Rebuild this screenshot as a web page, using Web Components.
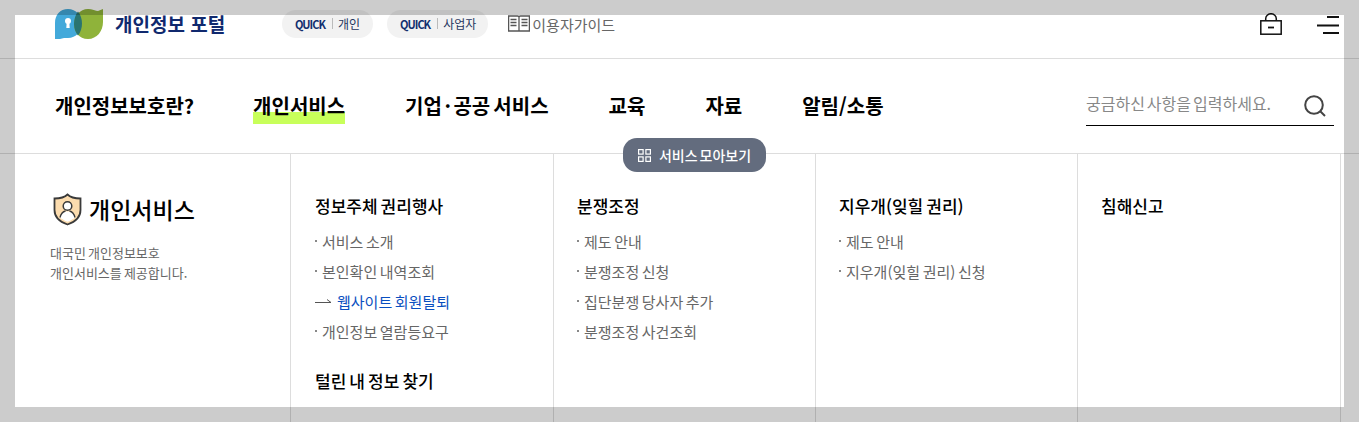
<!DOCTYPE html>
<html lang="ko">
<head>
<meta charset="utf-8">
<title>개인정보 포털</title>
<style>
html,body{margin:0;padding:0;height:422px;overflow:hidden;background:#fff}
body{font-family:"Noto Sans CJK KR","Noto Sans",sans-serif;position:relative;color:#000}
.dot{margin:0 2.500px}
</style>
</head>
<body>
<top-bar>
  <site-logo></site-logo>
  <quick-pill label="개인"></quick-pill>
  <quick-pill label="사업자" style="padding-right:12px"></quick-pill>
  <guide-link></guide-link>
</top-bar>
<main-nav>
  <nav-item style="margin-right:-1px">개인정보보호란?</nav-item>
  <nav-item active>개인서비스</nav-item>
  <nav-item>기업<span class="dot">·</span>공공 서비스</nav-item>
  <nav-item>교육</nav-item>
  <nav-item>자료</nav-item>
  <nav-item>알림/소통</nav-item>
  <search-box></search-box>
</main-nav>
<mega-panel>
  <panel-intro></panel-intro>
  <menu-col style="padding-left:24px">
    <menu-head>정보주체 권리행사</menu-head>
    <menu-item>서비스 소개</menu-item>
    <menu-item>본인확인 내역조회</menu-item>
    <menu-item active>웹사이트 회원탈퇴</menu-item>
    <menu-item>개인정보 열람등요구</menu-item>
    <menu-head second>털린 내 정보 찾기</menu-head>
  </menu-col>
  <menu-col>
    <menu-head>분쟁조정</menu-head>
    <menu-item>제도 안내</menu-item>
    <menu-item>분쟁조정 신청</menu-item>
    <menu-item>집단분쟁 당사자 추가</menu-item>
    <menu-item>분쟁조정 사건조회</menu-item>
  </menu-col>
  <menu-col>
    <menu-head>지우개(잊힐 권리)</menu-head>
    <menu-item>제도 안내</menu-item>
    <menu-item>지우개(잊힐 권리) 신청</menu-item>
  </menu-col>
  <menu-col>
    <menu-head>침해신고</menu-head>
  </menu-col>
</mega-panel>
<collect-button></collect-button>
<frame-overlay></frame-overlay>
<script>
function def(name, css, html){
  customElements.define(name, class extends HTMLElement{
    constructor(){
      super();
      this.attachShadow({mode:'open'}).innerHTML='<style>'+css+'</style>'+(typeof html==='function'?html(this):html);
    }
  });
}
def('top-bar',`:host{display:flex;align-items:center;box-sizing:border-box;height:59px;padding:0 20px 11px 55px;border-bottom:1px solid #ddd;position:relative}
.r{margin-left:auto;display:flex;align-items:center;gap:35px;padding-top:2px}svg{display:block}`,
`<slot></slot><div class="r">
<svg width="22" height="23" viewBox="0 0 22 23" fill="none" stroke="#111" stroke-width="1.500"><rect x=".8" y="7.800" width="20.400" height="13.400"/><path d="M5.700 7.500V5.700a5 4.700 0 0 1 10.600 0v1.800"/><path d="M8 14.500h6" stroke-width="1.800"/></svg>
<svg width="22" height="20" viewBox="0 0 22 20" fill="none" stroke="#111" stroke-width="2"><path d="M10 2h12M0 10.500h22M6 18h16"/></svg>
</div>`);
def('site-logo',`:host{display:flex;align-items:center;gap:12px;color:#10296e;font-size:19px;font-weight:700;line-height:30px;margin-right:56.700px;white-space:nowrap}
svg{display:block;flex:none;margin-top:0}`,
`<svg width="48" height="30" viewBox="0 0 48 30">
<path d="M13 0C21 0 27 6.500 27 14.500S21 29 13 29H9L5 30 0 30V14C0 6 5 0 13 0Z" fill="#43a9da"/>
<path d="M33 0C37 0 41 2 43 2L48 0V13C48 22 42 30 33 30S19 23 19 15 25 0 33 0Z" fill="#8fb33a"/>
<path d="M23 2.500C25.500 5.500 27 10 27 14.500S25.500 23.500 23 26.500C20.500 23.500 19 19.500 19 15S20.500 5.500 23 2.500Z" fill="#2a7470"/>
<circle cx="13" cy="12" r="3" fill="#fff"/><path d="M11.800 12h2.400l.5 7h-3.400z" fill="#fff"/>
</svg><span>개인정보 포털</span>`);
def('quick-pill',`:host{display:inline-flex;align-items:center;height:28px;padding:0 13px;margin-right:14px;border-radius:14px;background:#f2f2f2;white-space:nowrap}
b{font-size:11px;font-weight:700;color:#13306f;letter-spacing:-1px}
i{display:block;width:1px;height:11px;background:#bbb;margin:0 5px 0 7px}
span{font-size:12px;color:#26365f}`,
el=>`<b>QUICK</b><i></i><span>${el.getAttribute('label')}</span>`);
def('guide-link',`:host{display:inline-flex;align-items:center;gap:2px;margin-left:6px;font-size:15px;color:#666;white-space:nowrap}svg{display:block}span{padding-top:1px}`,
`<svg width="22" height="17" viewBox="0 0 22 17" fill="none" stroke="#555" stroke-width="1.300"><path d="M.6 1h9q1.400 0 1.400 1.200V16H.6zM21.400 1H12.400q-1.400 0-1.400 1.200V16H21.400z"/><path d="M2.500 4.500h6M2.500 7.500h6M2.500 10.500h6M13.500 4.500h6M13.500 7.500h6M13.500 10.500h6"/></svg><span>이용자가이드</span>`);
def('main-nav',`:host{display:flex;align-items:center;gap:60px;box-sizing:border-box;height:95px;padding:0 25px 0 55px;border-bottom:1px solid #ddd}`,`<slot></slot>`);
def('nav-item',`:host{display:block;font-size:20px;font-weight:700;line-height:34px;white-space:nowrap;color:#000;word-spacing:-2.500px}
span{display:inline-block;padding-bottom:1px;vertical-align:top}
:host([active]) span{background:linear-gradient(#c8ff5a,#c8ff5a) 0 100%/100% 12px no-repeat}`,`<span><slot></slot></span>`);
def('search-box',`:host{display:flex;align-items:center;justify-content:space-between;margin-left:auto;width:248px;height:44px;box-sizing:border-box;border-bottom:1px solid #000;margin-bottom:4px;padding-right:8px;white-space:nowrap}
span{font-size:16px;color:#888;word-spacing:-2.500px;margin-top:-2px}svg{display:block;margin-top:4px}`,
`<span>궁금하신 사항을 입력하세요.</span><svg width="22" height="22" viewBox="0 0 22 22" fill="none" stroke="#444" stroke-width="2"><circle cx="10" cy="10" r="8.800"/><path d="M16 16l5 5"/></svg>`);
def('mega-panel',`:host{display:grid;grid-template-columns:291px 263px 262px 262px 263px;height:268px;overflow:hidden}`,`<slot></slot>`);
def('panel-intro',`:host{display:block;border-right:1px solid #ddd;padding:38px 0 0 50px;height:100%;box-sizing:border-box}
.t{display:flex;align-items:center;gap:7px;margin-left:3px;font-size:23px;font-weight:500;line-height:34px;color:#000;white-space:nowrap}
svg{display:block;flex:none}
p{margin:17px 0 0;font-size:13px;line-height:20px;color:#666;word-spacing:-1.500px}`,
`<div class="t"><svg width="29" height="33" viewBox="0 0 29 33"><path d="M14.500 1.500C17 4 22 5.500 27.500 5.500V17C27.500 24 22 29 14.500 31.500 7 29 1.500 24 1.500 17V5.500C7 5.500 12 4 14.500 1.500Z" fill="#fcdcae" stroke="#3a3a3a" stroke-width="1.800"/><path d="M7 24.500c1-4.500 4-6 7.500-6s6.500 1.500 7.500 6c-2 1.700-4.500 3.200-7.500 4.300-3-1.100-5.500-2.600-7.500-4.300Z" fill="#fff"/><circle cx="14.500" cy="13" r="4.300" fill="#fff" stroke="#3a3a3a" stroke-width="1.500"/><path d="M7 24.500c1-4 3.500-6 5.500-6.500M22 24.500c-1-4-3.500-6-5.500-6.500" fill="none" stroke="#3a3a3a" stroke-width="1.300"/></svg><span>개인서비스</span></div>
<p>대국민 개인정보보호<br>개인서비스를 제공합니다.</p>`);
def('menu-col',`:host{display:block;border-right:1px solid #ddd;padding:36px 0 0 23px;height:100%;box-sizing:border-box}`,`<slot></slot>`);
def('menu-head',`:host{display:block;font-size:17px;font-weight:500;line-height:32px;color:#000;margin-bottom:5px;white-space:nowrap;word-spacing:-1.700px}
:host([second]){margin-top:18px}`,`<slot></slot>`);
def('menu-item',`:host{display:flex;align-items:center;font-size:15px;line-height:30px;color:#666;white-space:nowrap;word-spacing:-1.600px}
i{display:block;width:2px;height:2px;background:#888;margin:0 5px 3px 0;flex:none}
svg{display:none;flex:none;margin-right:5px}
:host([active]){color:#0a4fc0;}
:host([active]) i{display:none}
:host([active]) svg{display:block}`,
`<i></i><svg width="17" height="6" viewBox="0 0 17 6" fill="none" stroke="#555"><path d="M0 3.500h16M12 .500l4 3"/></svg><span><slot></slot></span>`);
def('collect-button',`:host{position:absolute;left:623px;top:138px;width:143px;height:34px;box-sizing:border-box;border-radius:14px;background:#636c7e;color:#fff;display:flex;align-items:center;justify-content:center;gap:8px;font-size:14px;font-weight:500;white-space:nowrap;word-spacing:-2px}svg{display:block}`,
`<svg width="13" height="13" viewBox="0 0 13 13" fill="none" stroke="#fff" stroke-width="1.200"><rect x=".6" y=".6" width="4.500" height="4.500"/><rect x="7.900" y=".6" width="4.500" height="4.500"/><rect x=".6" y="7.900" width="4.500" height="4.500"/><rect x="7.900" y="7.900" width="4.500" height="4.500"/></svg><span>서비스 모아보기</span>`);
def('frame-overlay',`:host{position:absolute;left:0;top:0;width:1359px;height:422px;box-sizing:border-box;border:15px solid rgba(0,0,0,.2);pointer-events:none}`,``);
</script>
</body>
</html>
